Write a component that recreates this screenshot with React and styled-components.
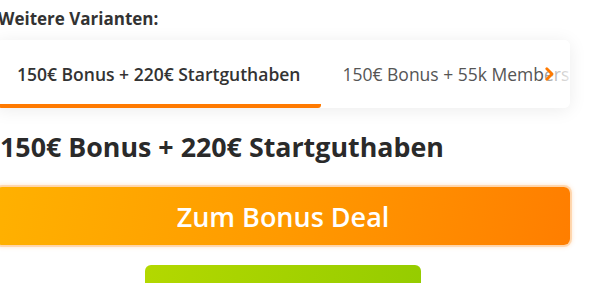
import React from 'react'
import styled, { createGlobalStyle } from 'styled-components'

const Global = createGlobalStyle`
  body {
    margin: 0;
    background: #fff;
    font-family: "Open Sans", "Noto Sans", Arial, sans-serif;
    color: #333;
    overflow: hidden;
  }
`

const Wrap = styled.div`
  width: 574px;
  margin-left: -4px;
  padding-top: 7px;
`

const Label = styled.div`
  font-size: 17px;
  font-weight: 700;
  color: #333;
  line-height: 24px;
  padding-left: 2px;
`

const TabCard = styled.div`
  position: relative;
  margin-top: 9px;
  height: 68px;
  background: #fff;
  border-radius: 6px;
  box-shadow: 0 2px 18px rgba(0, 0, 0, 0.08);
  overflow: hidden;
  display: flex;
`

const Tab = styled.div`
  flex: none;
  display: flex;
  align-items: center;
  padding: 4px 21px 0;
  font-size: 17.5px;
  white-space: nowrap;
  font-weight: ${p => (p.$active ? 600 : 400)};
  color: ${p => (p.$active ? '#333' : '#555')};
  border-bottom: 4px solid ${p => (p.$active ? '#ff7a00' : 'transparent')};
  border-bottom-right-radius: ${p => (p.$active ? '3px' : '0')};
`

const Fade = styled.div`
  position: absolute;
  top: 0;
  right: 0;
  bottom: 0;
  width: 26px;
  background: linear-gradient(to right, rgba(255,255,255,0.4), rgba(255,255,255,0.85));
  display: flex;
  align-items: center;
  padding-left: 1px;
  box-sizing: border-box;
`

const Heading = styled.h2`
  margin: 21px 0 0 4px;
  font-size: 26.8px;
  font-weight: 700;
  color: #2a2a2a;
  line-height: 36px;
`

const DealButton = styled.button`
  display: block;
  width: 100%;
  height: 58px;
  margin-top: 22px;
  border: none;
  border-radius: 6px;
  background: linear-gradient(100deg, #ffb100 0%, #ff9a00 50%, #ff7e00 100%);
  box-shadow: 0 0 0 2px rgba(255, 160, 60, 0.3), 0 0 4px 2px rgba(255, 150, 50, 0.25);
  color: #fff;
  font-family: inherit;
  font-size: 27px;
  font-weight: 600;
  cursor: pointer;
`

const SecondButton = styled.button`
  display: block;
  width: 276px;
  height: 50px;
  margin: 20px auto 0;
  border: none;
  border-radius: 6px;
  background: linear-gradient(100deg, #b3d800, #95cc00);
`

const Chevron = () => (
  <svg width="9" height="14" viewBox="0 0 9 14">
    <path d="M1.8 1.8 L7 7 L1.8 12.2" fill="none" stroke="#ff7a00" strokeWidth="2.8" strokeLinecap="round" strokeLinejoin="round" />
  </svg>
)

export default function App() {
  return (
    <>
      <Global />
      <Wrap>
        <Label>Weitere Varianten:</Label>
        <TabCard>
          <Tab $active>150€ Bonus + 220€ Startguthaben</Tab>
          <Tab>150€ Bonus + 55k Membership</Tab>
          <Fade><Chevron /></Fade>
        </TabCard>
        <Heading>150€ Bonus + 220€ Startguthaben</Heading>
        <DealButton>Zum Bonus Deal</DealButton>
        <SecondButton />
      </Wrap>
    </>
  )
}
